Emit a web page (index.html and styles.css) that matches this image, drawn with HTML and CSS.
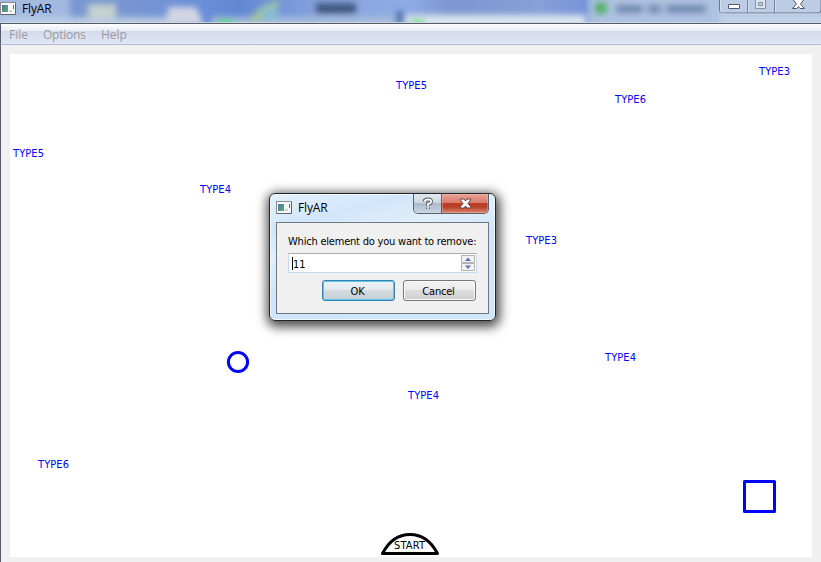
FILE: index.html
```html
<!DOCTYPE html>
<html lang="en">
<head>
<meta charset="utf-8">
<title>FlyAR</title>
<link rel="stylesheet" href="styles.css">
</head>
<body>
<svg width="0" height="0" class="defs">
  <defs>
    <linearGradient id="screen" x1="0" y1="0" x2="1" y2="1"><stop offset="0" stop-color="#4a74a8"/><stop offset="1" stop-color="#5fae70"/></linearGradient>
    <symbol id="app" viewBox="0 0 16 13">
      <rect x=".5" y=".5" width="15" height="12" fill="#f8f8f8" stroke="#858b91"/>
      <path d="M15.500 1v11.500H1" fill="none" stroke="#5f6468"/>
      <rect x="2" y="3" width="6" height="7" fill="url(#screen)"/>
      <rect x="9" y="8" width="3" height="2" fill="#d0d0d0"/>
      <path d="M13.500 3v4" stroke="#55707a"/>
    </symbol>
  </defs>
</svg>
<div class="window">
  <header class="titlebar">
    <svg class="glass" width="821" height="23" viewBox="0 0 821 23">
      <defs>
        <filter id="soft" filterUnits="userSpaceOnUse" x="-20" y="-20" width="861" height="63"><feGaussianBlur stdDeviation="3"/></filter>
      </defs>
      <g filter="url(#soft)">
        <path d="M0 17H170V34H0z" fill="#b9cbe2"/>
        <path d="M-18-18H70V34H-18z" fill="#b8cbe8" opacity=".65"/>
        <path d="M212 17H395V34H212z" fill="#a9bddb"/>
        <path d="M405 15H586V34H405z" fill="#dce6f0"/>
        <path d="M590-18H840V34H590z" fill="#afc2e1"/>
        <path d="M720 14H840V34H720z" fill="#bfd0e6"/>
        <path d="M88 4h28v14H88z" fill="#c5d2cf"/>
        <path d="M168 7h28l8 18h-38z" fill="#d3d5e3"/>
        <path d="M247 20L262 6l18-6-3 8-17 14z" fill="#9fc49a"/>
        <path d="M262 8h16v12h-16z" fill="#86bcd3"/>
        <path d="M316 3h40v11h-40z" fill="#344b70" opacity=".85"/>
        <path d="M396 11h9v14h-9z" fill="#4f74b2"/>
        <path d="M616 5h27v8h-27zM648 5h13v8h-13zM666 5h40v8h-40z" fill="#5a74a0" opacity=".8"/>
        <circle cx="601" cy="8" r="7" fill="#4fb060"/>
        <path d="M218 20h15v6h-15zM410 20h15v6h-15z" fill="#3fdf58"/>
      </g>
      <path d="M0 22.500H821" stroke="#d1dce9" opacity=".8"/>
    </svg>
    <svg class="app-icon" width="16" height="13"><use href="#app"/></svg>
    <span class="title">FlyAR</span>
    <svg class="controls" width="102" height="15" viewBox="0 0 102 15">
      <path d="M.5 0v10q0 3 3 3H99q3 0 3-3V0" fill="#c8d6e8" fill-opacity=".5" stroke="#68768b"/>
      <path d="M1.500 0v10q0 4 3 4H99" fill="none" stroke="#e0eaf4" opacity=".6"/>
      <path d="M28.500 0v13M55.500 0v13" stroke="#74839a"/>
      <path d="M29.500 0v12M56.500 0v12" stroke="#dce7f3" opacity=".7"/>
      <rect x="9.500" y="4.500" width="11" height="4" rx=".5" fill="#fff" stroke="#535666"/>
      <path d="M36.500 0v8.500h10V0M39.500 2.500h4v3h-4z" fill="#dce5ef" stroke="#8291a9"/>
      <path d="M74.500 0L77.500 4l-4 4.500h4.500l1.500-2 1.500 2h4.500L81.500 4l3-4" fill="#fff" stroke="#535666"/>
    </svg>
  </header>
  <nav class="menubar"><span class="file">File</span><span class="options">Options</span><span class="help">Help</span></nav>
  <main class="workspace">
    <svg class="scene" width="802" height="503" viewBox="10 54 802 503">
      <g class="types">
        <text x="396" y="89" textLength="31">TYPE5</text>
        <text x="759" y="75" textLength="31">TYPE3</text>
        <text x="615" y="103" textLength="31">TYPE6</text>
        <text x="13" y="157" textLength="31">TYPE5</text>
        <text x="200" y="193" textLength="31">TYPE4</text>
        <text x="526" y="244" textLength="31">TYPE3</text>
        <text x="605" y="361" textLength="31">TYPE4</text>
        <text x="408" y="399" textLength="31">TYPE4</text>
        <text x="38" y="468" textLength="31">TYPE6</text>
      </g>
      <circle cx="238" cy="362" r="9.600" fill="none" stroke="#00f" stroke-width="3"/>
      <rect x="744.500" y="481.500" width="30" height="30" fill="none" stroke="#00f" stroke-width="3" stroke-linejoin="round"/>
      <path d="M382.500 553.500C388 543 397 534.500 410 534.500S432 543 437.500 553.500z" fill="none" stroke="#000" stroke-width="3" stroke-linejoin="round"/>
      <text class="start" x="394" y="549" textLength="31">START</text>
    </svg>
  </main>
</div>
<section class="dialog">
  <header class="dialog-title">
    <svg class="app-icon" width="16" height="13"><use href="#app"/></svg>
    <span class="title">FlyAR</span>
    <div class="dialog-controls">
      <span class="question"><svg width="12" height="14" viewBox="0 0 12 14"><path d="M2.500 4.500Q2.500 2.500 6 2.500t3 2.300Q9 6.300 6 7v2M6 10.500v1.500" fill="none" stroke="#555b6b" stroke-width="3.800"/><path d="M2.500 4.500Q2.500 2.500 6 2.500t3 2.300Q9 6.300 6 7v2M6 10.300v1.500" fill="none" stroke="#fff" stroke-width="1.800"/></svg></span>
      <span class="close"><svg width="13" height="11" viewBox="0 0 13 11"><path d="M1.500 1h3.500l1.500 2L8 1h3.500v1L9 5.500l2.500 3V10H8L6.500 8 5 10H1.500V8.500L4 5.500 1.500 2z" fill="#fff" stroke="#63444d"/></svg></span>
    </div>
  </header>
  <div class="dialog-body">
    <label for="element"><span>Which element do you want to remove:</span></label>
    <div class="spin" id="element"><i class="caret"></i><span class="number">11</span>
      <svg width="14" height="17" viewBox="0 0 14 17"><path d="M.5.500h13v7H.5zM.5 8.500h13v7H.5z" fill="#f1f1f1" stroke="#b3b3b3"/><path d="M4 6l3-3.500L10 6zM4 10.500h6L7 14z" fill="#5c72b8"/></svg>
    </div>
    <div class="actions"><button class="ok">OK</button><button>Cancel</button></div>
  </div>
</section>
</body>
</html>
```

FILE: styles.css
```css
* { box-sizing: border-box; }
body {
  margin: 0;
  width: 821px;
  height: 562px;
  overflow: hidden;
  position: relative;
  font: 11px "DejaVu Sans Condensed", "DejaVu Sans", sans-serif;
  font-stretch: condensed;
  color: #000;
}
svg { display: block; flex: none; }
.defs { position: absolute; }
.window { height: 562px; display: flex; flex-direction: column; background: #f0f0f0; }
.titlebar {
  position: relative;
  height: 24px;
  flex: none;
  display: flex;
  align-items: flex-start;
  background: linear-gradient(90deg, #7d9bd1 0, #7895d1 130px, #6b8fd8 200px, #6288d5 240px, #8ba6dd 330px, #8fabe5 410px, #7e96d0 450px, #889fd7 540px, #7894d8 585px, #a9bede 600px);
  border-bottom: 1px solid #555a65;
  overflow: hidden;
}
.glass { position: absolute; left: 0; top: 0; }
.titlebar .app-icon { position: relative; margin: 2px 0 0 0; }
.titlebar .title { position: relative; margin-left: 6px; }
.title { font: 12px/17px "Open Sans", "Noto Sans", sans-serif; letter-spacing: -.15px; }
.controls { position: relative; margin-left: auto; }
.menubar {
  height: 21px;
  flex: none;
  display: flex;
  padding-left: 8px;
  gap: 16px;
  border-left: 1px solid #555a70;
  border-bottom: 1px solid #b5bdd4;
  background: linear-gradient(#fff 0, #e8ebf5 7px, #d5daec 7px, #e0e6f4 100%);
  font: 12px/22px "Open Sans", "Noto Sans", sans-serif;
  color: #9b9b9f;
}
.menubar .file { width: 18px; }
.menubar .options { width: 42px; letter-spacing: -.25px; }
.workspace { flex: 1; padding: 9px 0 0 9px; border-left: 1px solid #555a70; }
.scene { background: #fff; }
.scene text { font-size: 11px; }
.types { fill: #00f; }
.dialog {
  position: absolute;
  left: 269px;
  top: 193px;
  width: 227px;
  height: 128px;
  padding: 0 6px 7px;
  border: 1px solid #20262d;
  border-radius: 6px;
  background: linear-gradient(165deg, #e4f1fd 0, #d2e6fa 20%, #e0eefc 35%, #cfe4fa 55%, #cfe6fc 100%);
  box-shadow: inset 0 0 0 1px #f0f8ff, 1px 3px 11px 3px rgba(0,0,0,.7);
}
.dialog-title { height: 28px; display: flex; }
.dialog-title .app-icon { margin-top: 7px; }
.dialog-title .title { margin: 5px 0 0 6px; }
.dialog-controls { display: flex; width: 76px; height: 20px; margin-left: auto; border: 1px solid #59616d; border-top: 0; border-radius: 0 0 5px 5px; overflow: hidden; }
.dialog-controls span { display: flex; align-items: center; justify-content: center; }
.question { width: 28px; border-right: 1px solid #59616d; background: linear-gradient(#e3e9f0, #cbd5df 48%, #adb9c6 50%, #c9d8e4); }
.close { flex: 1; background: linear-gradient(#e8a296, #d87d6c 46%, #bd3d27 50%, #b84027 68%, #dc8770); box-shadow: inset 0 0 0 1px rgba(255,200,180,.35); }
.dialog-body { height: 92px; border: 1px solid #6f7880; background: #f0f0f0; padding: 11px 12px 0 11px; display: flex; flex-direction: column; }
.dialog-body label { height: 19px; line-height: 15px; white-space: nowrap; letter-spacing: -.21px; }
.spin { height: 20px; display: flex; align-items: center; background: #fff; border: 1px solid #c5daed; border-top-color: #abadb3; padding: 0 1px 0 3px; margin-right: -1px; }
.spin svg { margin-left: auto; }
.caret { width: 1px; height: 13px; background: #000; }
.number { padding-top: 2px; }
.actions { margin-top: 7px; display: flex; justify-content: flex-end; gap: 8px; }
button { width: 73px; height: 21px; padding: 1px 2px 0 0; font: inherit; letter-spacing: -.2px; border: 1px solid #777; border-radius: 3px; background: linear-gradient(#f2f2f2, #ebebeb 49%, #dddddd 50%, #cfcfcf); box-shadow: inset 0 0 0 1px #fafafa; }
button.ok { border-color: #3c7fb1; background: linear-gradient(#edf2f5, #e3e9ed 49%, #d2dbe0 50%, #c5d0d6); box-shadow: inset 0 0 0 1px #58c9ed; }
```
